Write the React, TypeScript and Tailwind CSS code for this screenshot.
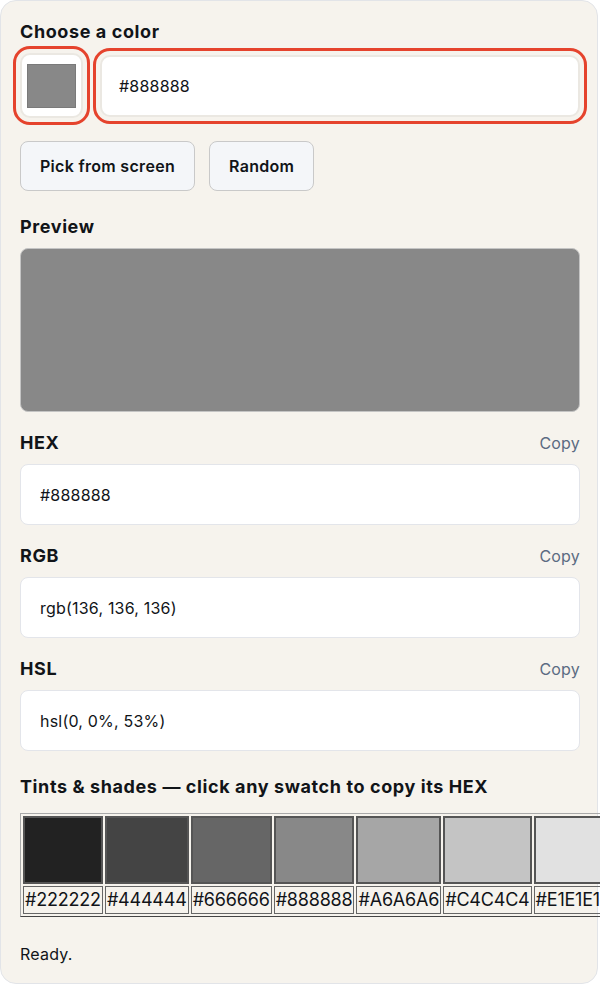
import React from "react";

const tints = ["#222222", "#444444", "#666666", "#888888", "#A6A6A6", "#C4C4C4", "#E1E1E1", "#FFFFFF"];

function Field({ label, value, mt }: { label: string; value: string; mt: string }) {
  return (
    <div className={mt}>
      <div className="flex h-[24px] items-center justify-between">
        <span className="text-[18px] font-bold leading-[24px] tracking-[0.6px] text-[#111418]">{label}</span>
        <span className="text-[16px] leading-[24px] tracking-[0.2px] text-[#5b6b82]">Copy</span>
      </div>
      <div className="mt-[9px] flex h-[61px] items-center rounded-[8px] border border-[#e3e5ea] bg-white px-[19px] text-[16px] tracking-[0.2px] text-[#111418]">
        {value}
      </div>
    </div>
  );
}

export default function App() {
  return (
    <div className="w-[600px] overflow-hidden bg-white" style={{ fontFamily: "Inter, 'Noto Sans', sans-serif" }}>
      <div className="w-[598px] rounded-[16px] border border-[#e2e4e8] bg-[#f6f3ed] pl-[19px] pr-[17px] pt-[19px] pb-[17px] text-[#111418]">
        <div className="h-[24px] text-[18px] font-bold leading-[24px] tracking-[0.6px]">Choose a color</div>
        <div className="mt-[9px] flex items-center gap-[17px]">
          <div className="flex h-[65px] w-[63px] shrink-0 items-center justify-center rounded-[10px] border-2 border-[#ebe8e2] bg-white outline outline-[3px] outline-offset-[4px] outline-[#e5432d]">
            <div className="h-[44px] w-[49px] border border-[#7a7a7a] bg-[#888888]"></div>
          </div>
          <div className="flex h-[62px] flex-1 items-center rounded-[10px] border-2 border-[#ebe8e2] bg-white px-[17px] text-[16px] tracking-[0.2px] outline outline-[3px] outline-offset-[4px] outline-[#e5432d]">
            #888888
          </div>
        </div>
        <div className="mt-[23px] flex gap-[14px]">
          <button className="h-[50px] rounded-[8px] border border-[#c9c9c9] bg-[#f4f6f9] px-[19px] text-[16px] font-semibold tracking-[0.3px] text-[#111418]">
            Pick from screen
          </button>
          <button className="h-[50px] rounded-[8px] border border-[#c9c9c9] bg-[#f4f6f9] px-[19px] text-[16px] font-semibold tracking-[0.3px] text-[#111418]">
            Random
          </button>
        </div>
        <div className="mt-[24px] h-[24px] text-[18px] font-bold leading-[24px] tracking-[0.6px]">Preview</div>
        <div className="mt-[9px] h-[164px] rounded-[8px] border border-[#c4c4c4] bg-[#888888]"></div>
        <Field label="HEX" value="#888888" mt="mt-[19px]" />
        <Field label="RGB" value="rgb(136, 136, 136)" mt="mt-[19px]" />
        <Field label="HSL" value="hsl(0, 0%, 53%)" mt="mt-[19px]" />
        <div className="mt-[24px] h-[24px] whitespace-nowrap text-[18px] font-bold leading-[24px] tracking-[0.6px]">
          Tints &amp; shades — click any swatch to copy its HEX
        </div>
        <div className="mt-[14px] w-[660px]">
          <table className="border-separate border-spacing-[2px] border border-t-[#a9a9a9] border-l-[#a9a9a9] border-r-[#444] border-b-[#444]">
            <tbody>
              <tr>
                {tints.map((c) => (
                  <td key={c} className="border border-[#555] p-0">
                    <div className="h-[66px] w-full border border-[#555]" style={{ backgroundColor: c }}></div>
                  </td>
                ))}
              </tr>
              <tr>
                {tints.map((c) => (
                  <td key={c} className="whitespace-nowrap border border-[#666] px-px py-0 text-[18px] leading-[26px] tracking-[-0.2px] text-[#111418]">
                    {c}
                  </td>
                ))}
              </tr>
            </tbody>
          </table>
        </div>
        <div className="mt-[25px] h-[24px] text-[16px] leading-[24px] tracking-[0.2px]">Ready.</div>
      </div>
    </div>
  );
}
